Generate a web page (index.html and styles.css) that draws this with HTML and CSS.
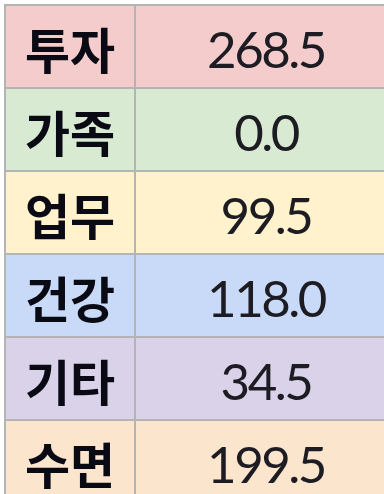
FILE: index.html
```html
<!DOCTYPE html>
<html lang="ko">
<head>
<meta charset="utf-8">
<link rel="stylesheet" href="styles.css">
</head>
<body>
<div class="sheet">
  <div class="cell label pink">투자</div><div class="cell num pink">268.5</div>
  <div class="cell label green">가족</div><div class="cell num green">0.0</div>
  <div class="cell label yellow">업무</div><div class="cell num yellow">99.5</div>
  <div class="cell label blue">건강</div><div class="cell num blue">118.0</div>
  <div class="cell label purple">기타</div><div class="cell num purple">34.5</div>
  <div class="cell label orange">수면</div><div class="cell num orange">199.5</div>
</div>
</body>
</html>
```

FILE: styles.css
```css
html, body {
  margin: 0;
  padding: 0;
  background: #ffffff;
}

body {
  width: 384px;
  height: 494px;
  overflow: hidden;
}

.sheet {
  margin: 4px 0 0 4px;
  display: grid;
  grid-template-columns: 128px 250px;
  grid-auto-rows: 81px;
  gap: 2px;
  padding: 2px 0 2px 2px;
  background: #b4b4b4;
  width: 380px;
  box-sizing: border-box;
}

.cell {
  display: flex;
  align-items: center;
  justify-content: center;
}

.label {
  font-family: "Noto Sans CJK KR", "Noto Sans", sans-serif;
  font-weight: 700;
  font-size: 49px;
  line-height: 1;
  color: #0a0a14;
  padding-top: 2px;
}

.num {
  font-family: "Lato", "Liberation Sans", sans-serif;
  font-size: 51px;
  line-height: 1;
  letter-spacing: -2.5px;
  color: #1c1c22;
  padding-top: 4px;
  padding-left: 10px;
}

.pink { background: #f4cccc; }
.green { background: #d9ead3; }
.yellow { background: #fff2cc; }
.blue { background: #c9daf8; }
.purple { background: #d9d2e9; }
.orange { background: #fce5cd; }
```
